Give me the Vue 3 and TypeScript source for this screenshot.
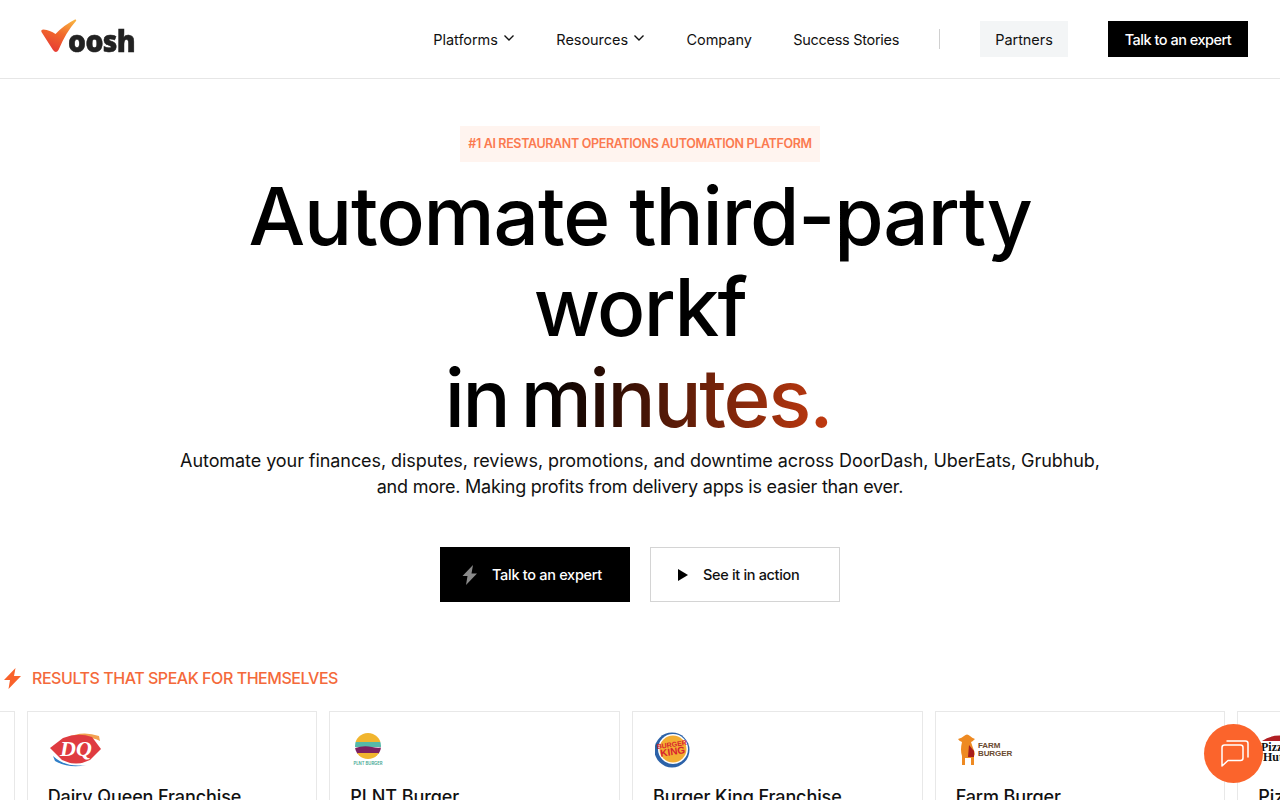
<script setup lang="ts">
const navItems = [
  { label: 'Platforms', caret: true, tight: false },
  { label: 'Resources', caret: true, tight: false },
  { label: 'Company', caret: false, tight: false },
  { label: 'Success Stories', caret: false, tight: true },
]
const cards = [
  { name: '', logo: '' },
  { name: 'Dairy Queen Franchise', logo: 'dq' },
  { name: 'PLNT Burger', logo: 'plnt' },
  { name: 'Burger King Franchise', logo: 'bk' },
  { name: 'Farm Burger', logo: 'farm' },
  { name: 'Pizza Hut', logo: 'pizza' },
]
</script>

<template>
  <div class="page">
    <header class="header">
      <div class="logo">
        <svg class="logo-mark" width="40" height="36" viewBox="0 0 40 36">
          <defs>
            <linearGradient id="vg" x1="0.8" y1="0" x2="0.35" y2="1">
              <stop offset="0" stop-color="#f8b040" />
              <stop offset="0.45" stop-color="#f16a2c" />
              <stop offset="1" stop-color="#e63a34" />
            </linearGradient>
          </defs>
          <path d="M1.500 13 Q0.500 10.500 3.500 10.500 Q10 11 15.500 15 Q24 6 35 0.500 Q37 0 36 2 Q26 13 18.500 31 Q16 35 13 31 Z" fill="url(#vg)" />
        </svg>
        <span class="logo-text">oosh</span>
      </div>
      <nav class="nav">
        <a v-for="item in navItems" :key="item.label" class="nav-link" :class="{ tight: item.tight }">
          {{ item.label }}
          <svg v-if="item.caret" width="12" height="8" viewBox="0 0 12 8" class="caret">
            <path d="M1.500 1.500 L6 6 L10.500 1.500" fill="none" stroke="#111" stroke-width="1.400" />
          </svg>
        </a>
      </nav>
      <div class="divider"></div>
      <a class="partners">Partners</a>
      <a class="talk">Talk to an expert</a>
    </header>

    <section class="hero">
      <div class="badge"><span class="badge-text">#1 AI RESTAURANT OPERATIONS AUTOMATION PLATFORM</span></div>
      <h1 class="headline">
        <span class="hl-line">Automate third-party</span>
        <span class="hl-line hl-mid">workf</span>
        <span class="hl-line grad">in minutes.</span>
      </h1>
      <p class="sub">
        <span class="sub-one">Automate your finances, disputes, reviews, promotions, and downtime across DoorDash, UberEats, Grubhub,</span>
        <span class="sub-two">and more. Making profits from delivery apps is easier than ever.</span>
      </p>
      <div class="cta">
        <a class="btn btn-dark">
          <svg width="16" height="20" viewBox="0 0 16 20">
            <path d="M11 0 L0.500 11 H5.500 L4 20 L15 8.500 H9.500 Z" fill="#8a8a8a" />
          </svg>
          Talk to an expert
        </a>
        <a class="btn btn-light">
          <svg width="12" height="14" viewBox="0 0 12 14">
            <path d="M1 1 L11 7 L1 13 Z" fill="#000" />
          </svg>
          See it in action
        </a>
      </div>
    </section>

    <section class="results">
      <div class="results-head">
        <svg width="17" height="21" viewBox="0 0 17 21">
          <path d="M11.500 0 L0 12 H6 L4.500 21 L17 8 H10 Z" fill="#f9622b" />
        </svg>
        <span>RESULTS THAT SPEAK FOR THEMSELVES</span>
      </div>
      <div class="track">
        <div v-for="(c, i) in cards" :key="i" class="card">
          <div class="card-logo">
            <svg v-if="c.logo === 'dq'" width="54" height="36" viewBox="0 0 54 36">
              <path d="M16 6 Q32 -2 49 4 L50 9 Q36 2 20 8 Z" fill="#f2a050" />
              <path d="M3 24 Q16 36 36 33 Q20 37 5 29 Z" fill="#2f7fc8" />
              <path d="M0 16 L13 6 Q28 0 42 5 L51 17 L40 28 Q26 35 12 28 Z" fill="#df3b40" />
              <text x="26" y="24" text-anchor="middle" class="dq-text">DQ</text>
            </svg>
            <svg v-else-if="c.logo === 'plnt'" width="36" height="36" viewBox="0 0 36 36">
              <defs>
                <clipPath id="pc"><circle cx="16" cy="14" r="13" /></clipPath>
              </defs>
              <g clip-path="url(#pc)">
                <rect x="0" y="0" width="36" height="10" fill="#f1b52e" />
                <rect x="0" y="10" width="36" height="5" fill="#56b9a8" />
                <path d="M0 17 Q10 13 20 15 T36 13 V22 H0 Z" fill="#7d2060" />
                <rect x="0" y="21" width="36" height="8" fill="#f1b52e" />
              </g>
              <text x="16" y="33" text-anchor="middle" class="plnt-text">PLNT BURGER</text>
            </svg>
            <svg v-else-if="c.logo === 'bk'" width="36" height="36" viewBox="0 0 36 36">
              <circle cx="17" cy="18" r="17.500" fill="#2c62a8" />
              <circle cx="18" cy="17" r="15" fill="#fff" />
              <circle cx="18" cy="17" r="13.500" fill="#f3ad32" />
              <text x="17" y="15" text-anchor="middle" class="bk-text" transform="rotate(-8 17 15)">BURGER</text>
              <text x="18" y="23" text-anchor="middle" class="bk-text bk-lg" transform="rotate(-8 18 22)">KING</text>
            </svg>
            <svg v-else-if="c.logo === 'farm'" width="60" height="34" viewBox="0 0 60 34">
              <path d="M0 6 Q4 5 6 3 Q9 0 12 3 Q14 5 17 6 Q14 9 13 9 L15 15 Q18 21 16 23 V32 H13 V25 H7 V32 H4 V23 Q2 17 4 9 Q1 8 0 6 Z" fill="#ee8a22" />
              <path d="M11 12 L16 18 V24 H10 Z" fill="#a81e1c" />
              <text x="20" y="15" class="farm-text">FARM</text>
              <text x="20" y="23" class="farm-text">BURGER</text>
            </svg>
            <svg v-else-if="c.logo === 'pizza'" width="54" height="36" viewBox="0 0 54 36">
              <path d="M2 9 Q18 -2 40 9 Z" fill="#b01f24" />
              <text x="1" y="19" class="pizza-text">Pizza</text>
              <text x="3" y="29" class="pizza-text">Hut</text>
            </svg>
          </div>
          <div class="card-name">{{ c.name }}</div>
        </div>
      </div>
    </section>

    <button class="chat" aria-label="Chat">
      <svg width="30" height="30" viewBox="0 0 30 30">
        <path d="M3 8.500 Q3 6 5.500 6 H21.500 Q24 6 24 8.500 V19 Q24 21.500 21.500 21.500 H9 L3 27 Z" fill="none" stroke="#fff" stroke-width="1.500" stroke-linejoin="round" />
        <path d="M8 2 H26.500 Q29 2 29 4.500 V18" fill="none" stroke="#fff" stroke-width="1.500" stroke-linecap="round" />
      </svg>
    </button>
  </div>
</template>

<style>
html, body { margin: 0; background: #fff; overflow: hidden; }
</style>

<style scoped>
.page {
  position: relative;
  width: 1280px;
  height: 800px;
  overflow: hidden;
  background: #fff;
  color: #000;
  font-family: Inter, "Noto Sans", sans-serif;
}
.header {
  height: 78px;
  border-bottom: 1px solid #e6e6e6;
  display: flex;
  align-items: center;
  padding: 0 32px 0 40px;
}
.logo { display: flex; align-items: flex-end; width: 100px; height: 36px; margin-top: -4px; }
.logo-mark { flex: none; margin-right: -12px; }
.logo-text {
  font-family: "Open Sans", sans-serif;
  font-weight: 800;
  font-size: 30px;
  line-height: 30px;
  letter-spacing: -0.6px;
  color: #222;
  margin-bottom: -1px;
  -webkit-text-stroke: 0.5px #222;
  transform: scaleX(0.94);
  transform-origin: left;
}
.nav { margin-left: auto; display: flex; align-items: center; gap: 41.500px; }
.nav-link {
  display: flex;
  align-items: center;
  gap: 6px;
  font-size: 14.500px;
  letter-spacing: -0.05px;
  color: #111;
}
.nav-link.tight { letter-spacing: -0.3px; }
.caret { margin-top: -2px; margin-left: -1px; }
.divider { width: 1px; height: 20px; background: #d0d0d0; margin: 0 40px; }
.partners {
  width: 88px;
  height: 36px;
  background: #f3f5f6;
  display: flex;
  align-items: center;
  justify-content: center;
  font-size: 14.500px;
  letter-spacing: -0.05px;
  color: #111;
}
.talk {
  margin-left: 40px;
  width: 140px;
  height: 36px;
  background: #000;
  color: #fff;
  display: flex;
  align-items: center;
  justify-content: center;
  font-size: 14.500px;
  font-weight: 500;
  letter-spacing: -0.5px;
}
.hero { display: flex; flex-direction: column; align-items: center; padding-top: 47px; }
.badge {
  width: 360px;
  height: 36px;
  background: #fff4ef;
  display: flex;
  align-items: center;
  justify-content: center;
  white-space: nowrap;
}
.badge-text {
  color: #fb7a50;
  font-size: 12.500px;
  line-height: 16px;
  font-weight: 600;
  letter-spacing: -0.35px;
}
.headline {
  margin: 8px 0 0;
  font-size: 80px;
  font-weight: 500;
  line-height: 91px;
  letter-spacing: -1.1px;
  text-align: center;
  display: flex;
  flex-direction: column;
  align-items: center;
}
.hl-line { display: block; white-space: nowrap; }
.hl-mid { letter-spacing: -1.600px; }
.grad {
  letter-spacing: -2.200px;
  word-spacing: -7px;
  margin-left: -4px;
  background: linear-gradient(90deg, #000 25%, #c23a10 100%);
  -webkit-background-clip: text;
  background-clip: text;
  color: transparent;
}
.sub {
  margin: 5px 0 0;
  font-size: 18px;
  line-height: 26px;
  text-align: center;
  color: #111;
  white-space: nowrap;
  display: flex;
  flex-direction: column;
}
.sub-one { letter-spacing: -0.07px; }
.sub-two { letter-spacing: -0.23px; }
.cta { display: flex; gap: 20px; margin-top: 47px; }
.btn {
  width: 190px;
  height: 55px;
  box-sizing: border-box;
  display: flex;
  align-items: center;
  font-size: 14.500px;
  font-weight: 500;
}
.btn-dark { background: #000; color: #fff; padding-left: 22px; gap: 14px; letter-spacing: -0.3px; }
.btn-light { background: #fff; border: 1px solid #d4d4d4; color: #111; padding-left: 26px; gap: 14px; letter-spacing: -0.33px; }
.results { margin-top: 65px; }
.results-head {
  display: flex;
  align-items: center;
  gap: 11px;
  padding-left: 4px;
  height: 22px;
  color: #f4693a;
  font-size: 16px;
  font-weight: 500;
  letter-spacing: -0.45px;
}
.track { display: flex; gap: 12px; margin-top: 22px; margin-left: -276px; }
.card {
  flex: none;
  width: 290.670px;
  height: 220px;
  box-sizing: border-box;
  border: 1px solid #e8e8e8;
  padding: 20px 20px 0;
}
.card-logo { height: 36px; display: flex; align-items: center; margin-left: 2px; margin-bottom: 16px; }
.card-name { font-size: 18px; font-weight: 500; line-height: 26px; letter-spacing: -0.1px; color: #111; white-space: nowrap; }
.dq-text { font-family: "Liberation Serif", serif; font-style: italic; font-weight: 700; font-size: 22px; fill: #fff; }
.plnt-text { font-family: Inter, sans-serif; font-size: 4.200px; font-weight: 600; fill: #3fa893; }
.bk-text { font-family: "Liberation Sans", sans-serif; font-weight: 700; font-size: 7px; fill: #d8232f; }
.bk-lg { font-size: 10px; }
.farm-text { font-family: "Liberation Sans", sans-serif; font-size: 8px; fill: #6a4a30; font-weight: 700; letter-spacing: -0.1px; }
.pizza-text { font-family: "Liberation Serif", serif; font-size: 12px; font-weight: 700; fill: #111; }
.chat {
  position: absolute;
  left: 1204px;
  top: 724px;
  width: 59px;
  height: 59px;
  border-radius: 50%;
  border: 0;
  padding: 0;
  background: #fb642c;
  display: flex;
  align-items: center;
  justify-content: center;
}
</style>
